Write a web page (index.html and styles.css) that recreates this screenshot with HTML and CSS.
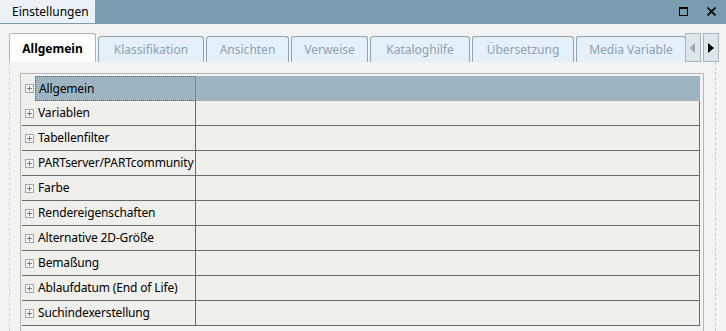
FILE: index.html
```html
<!DOCTYPE html>
<html lang="de">
<head>
    <meta charset="UTF-8" />
    <title>Einstellungen</title>
    <link rel="stylesheet" href="styles.css">
</head>
<body>
    <!-- Titelleiste -->
    <div class="titlebar">
        <div class="title-tab">Einstellungen</div>
        <div class="win-btns">
            <span class="btn-max"></span>
            <svg class="btn-close" width="9" height="9" viewBox="0 0 9 9">
                <path d="M0.5 0.5 L8.5 8.5 M8.5 0.5 L0.5 8.5" stroke="#000" stroke-width="1.6" />
            </svg>
        </div>
    </div>

    <div class="main">
        <!-- Reiter -->
        <div class="tabs">
            <div class="tab active" style="width:87px">Allgemein</div>
            <div class="tab" style="width:106px">Klassifikation</div>
            <div class="tab" style="width:83px">Ansichten</div>
            <div class="tab" style="width:77px">Verweise</div>
            <div class="tab" style="width:100px">Kataloghilfe</div>
            <div class="tab" style="width:102px">Übersetzung</div>
            <div class="tab tab-last" style="width:110px">Media Variable</div>
            <div class="scroll-btn">
                <svg width="6" height="10" viewBox="0 0 6 10"><path d="M5 0 L0 5 L5 10 Z" fill="#9aa6ae" /></svg>
            </div>
            <div class="scroll-btn">
                <svg width="6" height="10" viewBox="0 0 6 10"><path d="M0 0 L6 5 L0 10 Z" fill="#000" /></svg>
            </div>
        </div>

        <!-- Seite -->
        <div class="page">
            <div class="grid">
                <div class="row selected">
                    <div class="expander"><span class="plus"></span></div>
                    <div class="name focus">Allgemein</div>
                    <div class="value"></div>
                </div>
                <div class="row">
                    <div class="expander"><span class="plus"></span></div>
                    <div class="name">Variablen</div>
                    <div class="value"></div>
                </div>
                <div class="row">
                    <div class="expander"><span class="plus"></span></div>
                    <div class="name">Tabellenfilter</div>
                    <div class="value"></div>
                </div>
                <div class="row">
                    <div class="expander"><span class="plus"></span></div>
                    <div class="name">PARTserver/PARTcommunity</div>
                    <div class="value"></div>
                </div>
                <div class="row">
                    <div class="expander"><span class="plus"></span></div>
                    <div class="name">Farbe</div>
                    <div class="value"></div>
                </div>
                <div class="row">
                    <div class="expander"><span class="plus"></span></div>
                    <div class="name">Rendereigenschaften</div>
                    <div class="value"></div>
                </div>
                <div class="row">
                    <div class="expander"><span class="plus"></span></div>
                    <div class="name">Alternative 2D-Größe</div>
                    <div class="value"></div>
                </div>
                <div class="row">
                    <div class="expander"><span class="plus"></span></div>
                    <div class="name">Bemaßung</div>
                    <div class="value"></div>
                </div>
                <div class="row">
                    <div class="expander"><span class="plus"></span></div>
                    <div class="name">Ablaufdatum (End of Life)</div>
                    <div class="value"></div>
                </div>
                <div class="row">
                    <div class="expander"><span class="plus"></span></div>
                    <div class="name">Suchindexerstellung</div>
                    <div class="value"></div>
                </div>
            </div>
        </div>
    </div>
</body>
</html>
```

FILE: styles.css
```css
body {
    margin: 0;
    width: 726px;
    height: 331px;
    overflow: hidden;
    font-family: "Noto Sans", Arial, sans-serif;
    font-size: 12px;
    color: #000;
    background-color: #f3f3f3;
}
.titlebar {
    height: 24px;
    display: flex;
    background-color: #7a9db2;
}
.title-tab {
    width: 95px;
    padding-left: 12px;
    box-sizing: border-box;
    line-height: 23px;
    height: 23px;
    background-color: #eaf2f8;
}
.win-btns {
    margin-left: auto;
    display: flex;
    align-items: center;
    gap: 19px;
    padding-right: 10px;
    height: 24px;
}
.btn-max {
    width: 7px;
    height: 6px;
    border: 1px solid #000;
    border-top-width: 2px;
    margin-top: -1px;
}
.btn-close {
    margin-top: -1px;
}
.main {
    height: 307px;
}
.tabs {
    display: flex;
    align-items: flex-end;
    gap: 2px;
    padding: 9px 0 0 9px;
    height: 29px;
}
.tab {
    height: 26px;
    box-sizing: border-box;
    border: 1px solid #8ea6b9;
    border-bottom: none;
    border-radius: 3px 3px 0 0;
    background-color: #e6f0f8;
    color: #8ca1b4;
    text-align: center;
    line-height: 26px;
}
.tab.active {
    height: 29px;
    background-color: #fff;
    border-color: #adb3b8;
    color: #000;
    font-weight: bold;
    line-height: 30px;
}
.tab-last {
    margin-right: -2px;
}
.scroll-btn {
    width: 16px;
    height: 29px;
    box-sizing: border-box;
    border: 1px solid #a8b6bf;
    background-color: #dde6eb;
    display: flex;
    align-items: center;
    justify-content: center;
    margin-left: -1px;
}
.scroll-btn + .scroll-btn {
    margin-left: 0;
}
.page {
    margin: 0 10px 0 9px;
    height: 269px;
    box-sizing: border-box;
    border-left: 1px dashed #d2d6da;
    border-right: 1px dashed #c4ccd4;
    padding: 11px 11px 0 10px;
}
.grid {
    border: 1px solid #b6b6b6;
    border-bottom: none;
    padding: 2px 3px 0 0;
    height: 258px;
    box-sizing: border-box;
    overflow: hidden;
}
.row {
    display: flex;
    height: 25px;
    box-sizing: border-box;
    border-bottom: 1px solid #6b6b6b;
    background-color: #efefeb;
    margin-left: 1px;
}
.expander {
    width: 13px;
    display: flex;
    align-items: center;
    padding-left: 3px;
    box-sizing: border-box;
}
.plus {
    width: 9px;
    height: 9px;
    box-sizing: border-box;
    border: 1px solid #a6a6a6;
    background:
        linear-gradient(#7d7d7d, #7d7d7d) center / 5px 1px no-repeat,
        linear-gradient(#7d7d7d, #7d7d7d) center / 1px 5px no-repeat,
        #f7f7f7;
}
.name {
    width: 161px;
    box-sizing: border-box;
    padding-left: 3px;
    line-height: 24px;
    letter-spacing: -0.15px;
    white-space: nowrap;
    border-right: 1px solid #6b6b6b;
}
.value {
    flex: 1;
    border-right: 1px solid #6b6b6b;
}
.row.selected {
    border-bottom: none;
}
.row.selected .name,
.row.selected .value {
    background-color: #9db5c3;
}
.row.selected .value {
    border-right-color: #9db5c3;
}
.row.selected .name {
    border: 1px dotted #5a5a5a;
    line-height: 23px;
}
```
